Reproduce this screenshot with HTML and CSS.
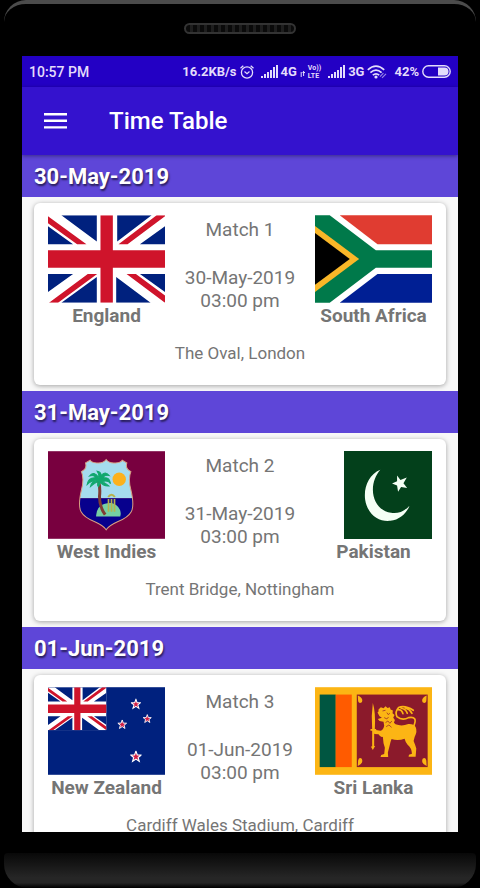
FILE: index.html
```html
<!DOCTYPE html>
<html lang="en">
<head>
  <meta charset="UTF-8" />
  <meta name="viewport" content="width=device-width, initial-scale=1.0"/>
  <title>Time Table</title>
  <link rel="stylesheet" href="styles.css">
</head>
<body>
  <!-- shared drawings -->
  <svg class="defs" width="0" height="0" aria-hidden="true">
    <defs>
      <symbol id="uk" viewBox="0 0 350 262" preserveAspectRatio="none">
        <rect width="350" height="262" fill="#fff"/>
        <path fill="#00217e" d="M40 0H146V79ZM0 33V87H75ZM207 0V79L310 0ZM350 33V87H275ZM0 176H75L0 230ZM146 185V262H40ZM204 185V262H307ZM275 176H350V230Z"/>
        <path fill="#cf142b" d="M0 3L115 87H87L0 24ZM325 0H350V3L238 87H211ZM119 176H147L30 262H3ZM235 176H263L350 240V262Z"/>
        <path fill="#cf142b" d="M157 0H194V105H350V157H194V262H157V157H0V105H157Z"/>
      </symbol>
      <symbol id="signal" viewBox="0 0 17 13">
        <path fill="currentColor" d="M0 11h2v2H0zM3 9h2v4H3zM6 7h2v6H6zM9 5h2v8H9zM12 2h2v11h-2zM15 0h2v13h-2z"/>
      </symbol>
      <symbol id="star" viewBox="-10 -10 20 20">
        <path d="M0-10L2.4-3.2L9.5-3.1L3.9 1.3L5.9 8.1L0 4.1L-5.9 8.1L-3.9 1.3L-9.5-3.1L-2.4-3.2Z"/>
      </symbol>
    </defs>
  </svg>

  <div class="phone">
    <div class="top-bezel">
      <div class="speaker"></div>
    </div>

    <div class="screen">
      <div class="status-bar">
        <span class="time">10:57 PM</span>
        <div class="status-icons">
          <span>16.2KB/s</span>
          <svg width="14" height="14" viewBox="0 0 14 14" fill="none" stroke="currentColor">
            <circle cx="7" cy="7.5" r="5.6" stroke-width="1.3"/>
            <path d="M4.5 6.5L7 8.8L9.5 6.5" stroke-width="1.2"/>
            <path d="M.5 3.3L3.3.8M13.5 3.3L10.7.8" stroke-width="1.3"/>
          </svg>
          <svg class="signal" width="17" height="13"><use href="#signal"/></svg>
          <span>4G</span>
          <svg class="data" width="5" height="6" viewBox="0 0 5 6" fill="none" stroke="currentColor"><path d="M1.2 1v5M3.6 0v5M2.5 1.5H5"/></svg>
          <span class="volte"><span>Vo))</span><span>LTE</span></span>
          <svg class="signal" width="17" height="13"><use href="#signal"/></svg>
          <span>3G</span>
          <svg width="20" height="14" viewBox="0 0 20 14" fill="none" stroke="currentColor">
            <path d="M.8 4.8Q9 -2.6 17.2 4.8M3.4 7.6Q9 2.6 14.6 7.6M5.8 10.2Q9 7.4 12.2 10.2" stroke-width="1.7"/>
            <circle cx="9" cy="12" r="1.6" fill="currentColor" stroke="none"/>
            <path d="M13 11.6L16.4 8.2M15 12.8L19 8.8" stroke-width="1.2" opacity=".6"/>
          </svg>
          <span class="percent">42%</span>
          <svg width="29" height="13" viewBox="0 0 29 13">
            <rect x=".8" y=".8" width="27.4" height="11.4" rx="5.7" fill="none" stroke="currentColor" stroke-width="1.4"/>
            <path d="M16 2.5h6.5a4 4 0 0 1 0 8H16z" fill="currentColor"/>
          </svg>
        </div>
      </div>

      <header class="app-bar">
        <button class="menu" aria-label="Open menu">
          <svg width="23" height="18" viewBox="0 0 23 18"><path fill="#fff" d="M0 1h23v2.4H0zM0 7.6h23V10H0zM0 14.2h23v2.4H0z"/></svg>
        </button>
        <h1>Time Table</h1>
      </header>

      <main class="schedule">
        <section>
          <h2>30-May-2019</h2>
          <article class="card">
            <div class="teams">
              <div class="team">
                <svg class="flag" viewBox="0 0 350 262"><use href="#uk"/></svg>
                <h3>England</h3>
              </div>
              <div class="info">
                <p class="match">Match 1</p>
                <p>30-May-2019</p>
                <p>03:00 pm</p>
              </div>
              <div class="team">
                <svg class="flag" viewBox="0 0 350 262">
                  <rect width="350" height="262" fill="#fff"/>
                  <path fill="#e03c31" d="M74 0H350V87H187Z"/>
                  <path fill="#001f94" d="M74 262H350V176H187Z"/>
                  <path fill="#00794a" d="M0 0H44L182 105H350V157H182L44 262H0Z"/>
                  <path fill="#f9b728" d="M0 32L132 131L0 230Z"/>
                  <path fill="#000" d="M0 53L104 131L0 208Z"/>
                </svg>
                <h3>South Africa</h3>
              </div>
            </div>
            <p class="venue">The Oval, London</p>
          </article>
        </section>

        <section>
          <h2>31-May-2019</h2>
          <article class="card">
            <div class="teams">
              <div class="team">
                <svg class="flag" viewBox="0 0 350 262">
                  <defs>
                    <clipPath id="shield"><path d="M174 25Q183 37 202 35Q218 34 222 27L236 35Q230 52 248 61Q239 82 248 116Q259 164 249 181Q240 198 208 211Q181 223 174 235Q167 223 140 211Q108 198 99 181Q89 164 100 116Q109 82 100 61Q118 52 112 35L126 27Q130 34 146 35Q165 37 174 25Z"/></clipPath>
                  </defs>
                  <rect width="350" height="262" fill="#78003f"/>
                  <g clip-path="url(#shield)">
                    <rect x="80" y="20" width="190" height="121" fill="#a5dcee"/>
                    <rect x="80" y="141" width="190" height="100" fill="#07008d"/>
                    <path fill="#76cfa3" d="M144 195Q143 175 158 163Q170 154 190 155Q209 159 216 177Q219 187 216 195Z"/>
                  </g>
                  <circle cx="213" cy="84" r="20" fill="#fcb11c"/>
                  <path d="M151 88Q157 111 154 135Q154 167 171 190" fill="none" stroke="#803b32" stroke-width="9"/>
                  <path fill="#12a86e" stroke="#12a86e" stroke-width="3" d="M153 80Q137 57 124 74Q138 69 144 80Q121 77 117 100Q130 87 145 89Q130 90 127 106Q143 93 151 91Q146 102 151 106L157 93Q165 105 182 104Q171 94 163 91Q180 86 187 97Q185 76 164 80Q170 69 183 73Q171 58 159 73Q159 62 147 60Q153 68 153 80Z"/>
                  <path d="M181 143V181M190 143V181M199 143V181" stroke="#b7b34c" stroke-width="5"/>
                  <path d="M180 137Q190 123 200 137" fill="none" stroke="#b7b34c" stroke-width="6"/>
                  <path fill="none" stroke="#d9a183" stroke-width="3" d="M174 25Q183 37 202 35Q218 34 222 27L236 35Q230 52 248 61Q239 82 248 116Q259 164 249 181Q240 198 208 211Q181 223 174 235Q167 223 140 211Q108 198 99 181Q89 164 100 116Q109 82 100 61Q118 52 112 35L126 27Q130 34 146 35Q165 37 174 25Z"/>
                </svg>
                <h3>West Indies</h3>
              </div>
              <div class="info">
                <p class="match">Match 2</p>
                <p>31-May-2019</p>
                <p>03:00 pm</p>
              </div>
              <div class="team">
                <svg class="flag square" viewBox="0 0 262 262">
                  <rect width="262" height="262" fill="#03401b"/>
                  <path fill="#f5fff5" d="M108 56C74 70 58 108 63 145C70 190 105 212 138 208C165 205 187 185 195 163C178 182 158 187 140 184C108 180 86 150 86 115C86 92 95 72 108 56Z"/>
                  <path fill="#f5fff5" d="M158 73L168 86L187 79L177 96L188 110L170 107L161 121L158 103L143 97L158 90Z"/>
                </svg>
                <h3>Pakistan</h3>
              </div>
            </div>
            <p class="venue">Trent Bridge, Nottingham</p>
          </article>
        </section>

        <section>
          <h2>01-Jun-2019</h2>
          <article class="card">
            <div class="teams">
              <div class="team">
                <svg class="flag" viewBox="0 0 350 262">
                  <rect width="350" height="262" fill="#00217e"/>
                  <use href="#uk" width="175" height="129"/>
                  <g fill="#d21f45" stroke="#fff" stroke-width="2">
                    <use href="#star" x="248" y="34" width="30" height="34"/>
                    <use href="#star" x="208" y="95" width="28" height="34"/>
                    <use href="#star" x="284" y="80" width="26" height="30"/>
                    <use href="#star" x="246" y="190" width="34" height="36"/>
                  </g>
                </svg>
                <h3>New Zealand</h3>
              </div>
              <div class="info">
                <p class="match">Match 3</p>
                <p>01-Jun-2019</p>
                <p>03:00 pm</p>
              </div>
              <div class="team">
                <svg class="flag" viewBox="0 0 350 262">
                  <rect width="350" height="262" fill="#fcb514"/>
                  <rect x="14" y="22" width="48" height="217" fill="#005641"/>
                  <rect x="62" y="22" width="48" height="217" fill="#ff5b00"/>
                  <rect x="125" y="22" width="212" height="217" fill="#8b1a2b"/>
                  <g fill="#fcb514">
                    <!-- bo leaves -->
                    <path d="M128 25Q146 33 140 45Q132 50 129 42ZM334 25Q316 33 322 45Q330 50 333 42ZM128 236Q146 228 140 214Q132 208 129 219ZM334 236Q316 228 322 214Q330 208 333 219Z"/>
                    <!-- sword -->
                    <path d="M173 47Q182 76 179 125H183V130H177V176H180L173 188L167 177H171V130H166V125H171Q168 83 173 47Z"/>
                    <!-- lion -->
                    <path d="M190 67L197 60L205 63L211 57L217 62L224 60L226 67L233 70L232 78L238 83L234 91L239 98L236 106L241 111Q260 118 279 110Q296 109 301 119Q307 132 298 149L295 161Q300 173 303 183L301 208H280L281 202L290 199Q289 181 277 172Q270 163 268 154Q248 161 229 155Q226 162 223 176L218 195L219 209H196L198 203L207 200L209 181L205 168L203 148Q197 152 190 141L178 140L173 133L177 127L196 130Q204 129 207 115L205 103L193 101L188 95L200 91L193 87L187 76L190 73Z"/>
                  </g>
                  <path d="M296 115Q308 86 280 91Q261 101 245 88Q238 74 250 61Q268 53 294 69M247 67Q260 66 263 79M258 63Q272 65 276 78M270 62Q284 66 290 78" fill="none" stroke="#fcb514" stroke-width="5" stroke-linecap="round"/>
                  <path d="M202 71L211 69M215 76L219 82L224 78M207 91L215 95L220 89M211 106L218 101L224 108L230 101M213 118L221 113L229 120" fill="none" stroke="#8b1a2b" stroke-width="2"/>
                </svg>
                <h3>Sri Lanka</h3>
              </div>
            </div>
            <p class="venue">Cardiff Wales Stadium, Cardiff</p>
          </article>
        </section>
      </main>
    </div>

    <div class="bottom-bezel"></div>
  </div>
</body>
</html>
```
FILE: styles.css
```css
* {
  box-sizing: border-box;
}
body {
  margin: 0;
  background: #000;
  font-family: Roboto, "Liberation Sans", sans-serif;
  color: #757575;
}
h1, h2, h3, p {
  margin: 0;
}
svg {
  display: block;
  flex-shrink: 0;
}
.defs {
  position: absolute;
}
.phone {
  display: flex;
  flex-direction: column;
  height: 100vh;
  background: #000;
}
.top-bezel {
  display: flex;
  justify-content: center;
  flex-shrink: 0;
  height: 56px;
  margin: 0 4px;
  padding-top: 19px;
  border-top: 4px solid #4b4b4b;
  border-radius: 22px 22px 0 0;
}
.speaker {
  width: 112px;
  height: 11px;
  border: 2px solid #333;
  border-radius: 6px;
  background: repeating-linear-gradient(90deg, #0a0a0a 0 4px, #1e1e1e 4px 7px);
}
.screen {
  display: flex;
  flex-direction: column;
  flex: 1;
  min-height: 0;
  margin: 0 22px;
  background: #f8f8f8;
}
.status-bar {
  display: flex;
  align-items: center;
  justify-content: space-between;
  flex-shrink: 0;
  height: 31px;
  padding: 0 7px;
  background: #2300c4;
  color: #e3dcfb;
  font-size: 14px;
  font-weight: 500;
}
.status-icons {
  display: flex;
  align-items: center;
  gap: 3px;
  font-size: 13px;
  font-weight: 700;
}
.signal {
  margin-left: 4px;
}
.data {
  margin-top: 5px;
}
.volte {
  display: flex;
  flex-direction: column;
  font-size: 7px;
  line-height: 8px;
}
.percent {
  margin-left: 4px;
}
.app-bar {
  position: relative;
  display: flex;
  align-items: center;
  flex-shrink: 0;
  gap: 42px;
  height: 68px;
  padding: 0 22px;
  background: #3412ce;
  color: #fff;
  box-shadow: 0 1px 4px rgba(0, 0, 0, 0.4);
}
.app-bar h1 {
  font-size: 24px;
  font-weight: 500;
}
.menu {
  padding: 0;
  border: none;
  background: none;
  cursor: pointer;
}
.schedule {
  flex: 1;
  min-height: 0;
  overflow-y: auto;
  scrollbar-width: none;
}
.schedule h2 {
  padding: 2px 12px 0;
  background: #5e46d8;
  color: #fff;
  font-size: 22px;
  line-height: 40px;
  text-shadow: 1px 2px 2px rgba(0, 0, 0, 0.6);
}
.card {
  margin: 6px 12px;
  padding: 12px 14px 20px;
  border-radius: 6px;
  background: #fff;
  box-shadow: 0 1px 5px rgba(0, 0, 0, 0.35);
}
section {
  display: flow-root;
}
.teams {
  display: grid;
  grid-template-columns: 117px 1fr 117px;
}
.team {
  display: flex;
  flex-direction: column;
  align-items: flex-end;
}
.flag {
  width: 117px;
  height: 88px;
}
.flag.square {
  width: 88px;
}
.team h3 {
  align-self: center;
  font-size: 19px;
  line-height: 26px;
  white-space: nowrap;
}
.info {
  padding-top: 3px;
  font-size: 19px;
  line-height: 23px;
  text-align: center;
}
.match {
  margin-bottom: 25px;
}
.venue {
  margin-top: 12px;
  font-size: 17px;
  line-height: 24px;
  text-align: center;
}
.bottom-bezel {
  flex-shrink: 0;
  height: 35px;
  margin: 21px 4px 0;
  border-radius: 4px 4px 24px 24px;
  background: linear-gradient(#080808, #262626 70%, #262626 85%, #000);
}
```
